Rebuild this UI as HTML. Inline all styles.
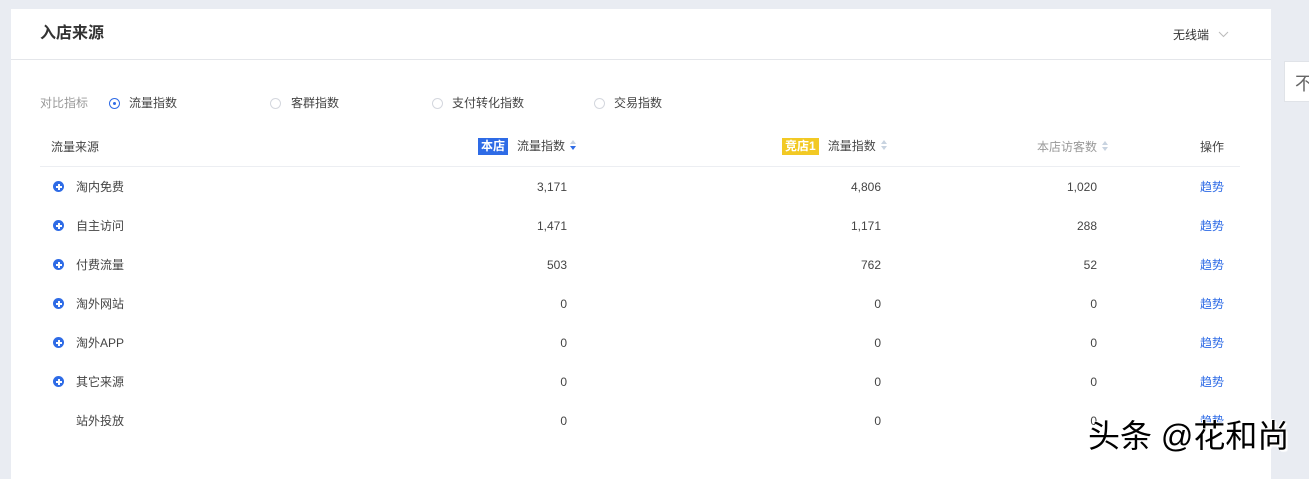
<!DOCTYPE html>
<html><head><meta charset="utf-8"><style>
body{margin:0;width:1309px;height:470px;background:#e9ecf2;font-family:"Liberation Sans","Noto Sans CJK SC",sans-serif;position:relative;overflow:hidden;color:#444}
.card{position:absolute;left:11px;top:9px;width:1260px;height:470px;background:#fff}
.abs{position:absolute;white-space:nowrap}
.hd{position:absolute;left:0;top:50px;width:1260px;height:1px;background:#e4e6ea}
.f12{font-size:12px;line-height:16px}
.radio{position:absolute;width:11px;height:11px;border:1px solid #d4d7de;border-radius:50%;box-sizing:border-box}
.radio.on{border-color:#2e6be6}
.radio.on::after{content:"";position:absolute;left:3px;top:3px;width:3px;height:3px;border-radius:50%;background:#2e6be6}
.plus{position:absolute;left:42px;width:11px;height:11px;border-radius:50%;background:#2e6be6}
.plus::before{content:"";position:absolute;left:2.5px;top:5px;width:6px;height:1.5px;background:#fff}
.plus::after{content:"";position:absolute;left:5px;top:2.5px;width:1.5px;height:6px;background:#fff}
.r{text-align:right}
.sort{display:inline-block;vertical-align:middle;margin-left:5px;width:7px;height:11px;position:relative;top:-1px}
.sort::before{content:"";position:absolute;left:0;top:0;border:3.5px solid transparent;border-bottom:4px solid #c8d3e0;border-top:0}
.sort::after{content:"";position:absolute;left:0;top:6px;border:3.5px solid transparent;border-top:4px solid #c8d3e0;border-bottom:0}
.sort.act::after{border-top-color:#2e6be6}
.tag{display:inline-block;color:#fff;font-size:12px;line-height:17px;padding:0 3px;margin-right:9px;font-weight:bold}
.link{color:#2e6be6}
</style></head><body>
<div class="card">
<div class="abs" style="left:29px;top:15px;font-size:16px;line-height:20px;font-weight:bold;color:#333">入店来源</div>
<div class="abs f12" style="left:1162px;top:18px;color:#333">无线端</div>
<svg class="abs" style="left:1207px;top:22px" width="11" height="7"><path d="M1 1L5.5 5.5L10 1" fill="none" stroke="#bbb" stroke-width="1"/></svg>
<div class="hd"></div>
<div class="abs f12" style="left:29px;top:86px;color:#999">对比指标</div>
<div class="radio on" style="left:98px;top:89px"></div><div class="abs f12" style="left:118px;top:86px">流量指数</div>
<div class="radio" style="left:259px;top:89px"></div><div class="abs f12" style="left:280px;top:86px">客群指数</div>
<div class="radio" style="left:421px;top:89px"></div><div class="abs f12" style="left:441px;top:86px">支付转化指数</div>
<div class="radio" style="left:583px;top:89px"></div><div class="abs f12" style="left:603px;top:86px">交易指数</div>

<div class="abs f12" style="left:40px;top:130px">流量来源</div>
<div class="abs f12" style="left:467px;top:129px"><span class="tag" style="background:#2e6be6">本店</span>流量指数<span class="sort act"></span></div>
<div class="abs f12" style="left:771px;top:129px"><span class="tag" style="background:#f2c924">竞店1</span>流量指数<span class="sort"></span></div>
<div class="abs f12" style="left:1026px;top:130px;color:#999">本店访客数<span class="sort"></span></div>
<div class="abs f12" style="left:1189px;top:130px">操作</div>
<div class="abs" style="left:29px;top:157px;width:1200px;height:1px;background:#eceef2"></div>

<div id="rows"></div>
</div>
<div class="abs" style="left:1284px;top:61px;width:30px;height:41px;background:#fff;border:1px solid #e0e3e8;box-sizing:border-box"><span style="position:absolute;left:10px;top:8px;font-size:18px;color:#666">不</span></div>
<div class="abs" style="left:1088px;top:416px;font-size:32px;line-height:40px;color:#000;text-shadow:1px 1px 0 #fff,-1px -1px 0 #fff,2px 2px 1px #fff">头条 @花和尚</div>
<script>
var d=[["淘内免费","3,171","4,806","1,020",1],["自主访问","1,471","1,171","288",1],["付费流量","503","762","52",1],["淘外网站","0","0","0",1],["淘外APP","0","0","0",1],["其它来源","0","0","0",1],["站外投放","0","0","0",0]];
var h="";d.forEach(function(r,i){var y=170+39*i;
if(r[4])h+='<div class="plus" style="top:'+(y+2)+'px"></div>';
h+='<div class="abs f12" style="left:65px;top:'+y+'px">'+r[0]+'</div>';
h+='<div class="abs f12 r" style="right:704px;top:'+y+'px">'+r[1]+'</div>';
h+='<div class="abs f12 r" style="right:390px;top:'+y+'px">'+r[2]+'</div>';
h+='<div class="abs f12 r" style="right:174px;top:'+y+'px">'+r[3]+'</div>';
h+='<div class="abs f12 link" style="left:1189px;top:'+y+'px">趋势</div>';});
document.getElementById("rows").innerHTML=h;
</script>
</body></html>
